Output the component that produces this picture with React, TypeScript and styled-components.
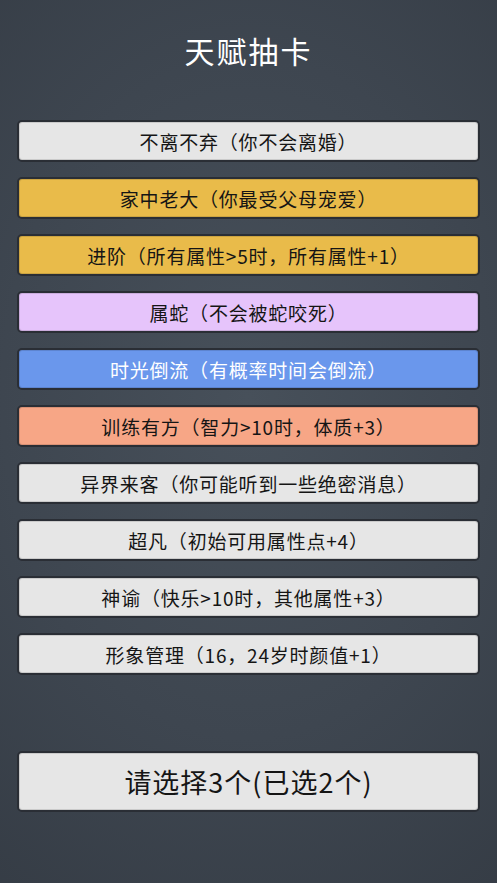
import React from "react";
import styled, { createGlobalStyle } from "styled-components";

const GlobalStyle = createGlobalStyle`
  html, body {
    margin: 0;
    padding: 0;
    background: #373e47;
  }
  * {
    box-sizing: border-box;
  }
`;

const Page = styled.div`
  width: 497px;
  min-height: 883px;
  padding: 0 17px;
  display: flex;
  flex-direction: column;
  font-family: "Noto Sans CJK SC", "Noto Sans", sans-serif;
  background: radial-gradient(
    ellipse 90% 70% at 50% 45%,
    #47505a 0%,
    #3e4650 55%,
    #353c45 100%
  );
`;

const Title = styled.h1`
  margin: 0;
  height: 100px;
  display: flex;
  align-items: center;
  justify-content: center;
  color: #ffffff;
  font-size: 30px;
  font-weight: 400;
  letter-spacing: 2px;
`;

const List = styled.div`
  margin-top: 20px;
  display: flex;
  flex-direction: column;
  gap: 15px;
`;

const COLORS: Record<string, string> = {
  common: "#e6e6e6",
  gold: "#e9bb4a",
  purple: "#e6c4fb",
  blue: "#6a97ec",
  orange: "#f7a686",
};

const Card = styled.div<{ $grade: string }>`
  height: 42px;
  display: flex;
  align-items: center;
  justify-content: center;
  border: 2px solid #2a2e35;
  border-radius: 5px;
  box-shadow: inset 0 0 0 1px rgba(0, 0, 0, 0.12);
  background: ${(p) => COLORS[p.$grade]};
  color: ${(p) => (p.$grade === "blue" ? "#ffffff" : "#151515")};
  font-size: 19px;
  letter-spacing: 0.8px;
  line-height: 1;
`;

const Submit = styled.div`
  margin-top: 76px;
  height: 61px;
  display: flex;
  align-items: center;
  justify-content: center;
  border: 2px solid #2a2e35;
  border-radius: 5px;
  box-shadow: inset 0 0 0 1px rgba(0, 0, 0, 0.12);
  background: #e6e6e6;
  color: #151515;
  font-size: 27px;
  letter-spacing: 1px;
  line-height: 1;
`;

const talents = [
  { text: "不离不弃（你不会离婚）", grade: "common" },
  { text: "家中老大（你最受父母宠爱）", grade: "gold" },
  { text: "进阶（所有属性>5时，所有属性+1）", grade: "gold" },
  { text: "属蛇（不会被蛇咬死）", grade: "purple" },
  { text: "时光倒流（有概率时间会倒流）", grade: "blue" },
  { text: "训练有方（智力>10时，体质+3）", grade: "orange" },
  { text: "异界来客（你可能听到一些绝密消息）", grade: "common" },
  { text: "超凡（初始可用属性点+4）", grade: "common" },
  { text: "神谕（快乐>10时，其他属性+3）", grade: "common" },
  { text: "形象管理（16，24岁时颜值+1）", grade: "common" },
];

export default function App() {
  return (
    <>
      <GlobalStyle />
      <Page>
        <Title>天赋抽卡</Title>
        <List>
          {talents.map((t) => (
            <Card key={t.text} $grade={t.grade}>
              {t.text}
            </Card>
          ))}
        </List>
        <Submit>请选择3个(已选2个)</Submit>
      </Page>
    </>
  );
}
